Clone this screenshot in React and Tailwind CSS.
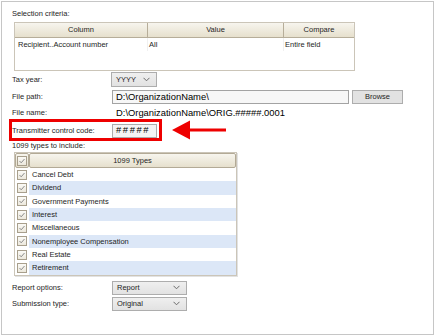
import React from 'react';

const types = [
  'Cancel Debt',
  'Dividend',
  'Government Payments',
  'Interest',
  'Miscellaneous',
  'Nonemployee Compensation',
  'Real Estate',
  'Retirement',
];

function Chevron() {
  return (
    <svg width="7" height="5" viewBox="0 0 7 5" className="shrink-0">
      <polyline points="0.5,0.8 3.5,3.8 6.5,0.8" fill="none" stroke="#6b6b6b" strokeWidth="1" />
    </svg>
  );
}

function CheckBox() {
  return (
    <div className="w-[10px] h-[10px] border border-[#a89f8c] bg-linear-to-b from-[#fbfaf6] to-[#ece8dc] flex items-center justify-center">
      <svg width="8" height="8" viewBox="0 0 8 8">
        <polyline points="1.5,4 3.2,5.8 6.5,2" fill="none" stroke="#8c8c8c" strokeWidth="1" />
      </svg>
    </div>
  );
}

function Select({ value, className }) {
  return (
    <div
      className={`flex items-center justify-between border border-[#adadad] bg-linear-to-b from-[#efefef] to-[#e2e2e2] pl-[4px] pr-[6px] ${className}`}
    >
      <span>{value}</span>
      <Chevron />
    </div>
  );
}

function Row({ label, className, children }) {
  return (
    <div className={`flex items-center ${className}`}>
      <span className="w-[100px] shrink-0">{label}</span>
      {children}
    </div>
  );
}

export default function App() {
  return (
    <div className="w-[435px] h-[335px] bg-white pl-[1px] pt-[1px] font-['Liberation_Sans',Arial,sans-serif] text-[7.5px] text-[#1e1e1e]">
      <div className="w-[433px] h-[334px] border border-[#c6c6c6] pl-[10px] pt-[7px]">
        <p className="leading-[10px]">Selection criteria:</p>

        {/* criteria grid */}
        <div className="mt-[3px] ml-[2px] w-[341px] h-[49px] border border-[#cbc5b8]">
          <div className="flex h-[15px] rounded-t-[2px] border-b border-[#b6ad99] bg-linear-to-b from-[#f7f5ee] to-[#e6e0cd]">
            <div className="w-[133px] flex items-center justify-center border-r border-[#b6ad99]">Column</div>
            <div className="w-[136px] flex items-center justify-center border-r border-[#b6ad99]">Value</div>
            <div className="flex-1 flex items-center justify-center">Compare</div>
          </div>
          <div className="flex h-[13px] items-center">
            <div className="w-[133px] h-full flex items-center pl-[3px] border-r border-[#f0f0f0]">Recipient..Account number</div>
            <div className="w-[136px] h-full flex items-center pl-[1px] border-r border-[#f0f0f0]">All</div>
            <div className="flex-1 h-full flex items-center pl-[1px]">Entire field</div>
          </div>
        </div>

        <Row label="Tax year:" className="mt-[1px] h-[15px]">
          <Select value="YYYY" className="-ml-[1px] w-[46px] h-[15px]" />
        </Row>

        <Row label="File path:" className="mt-[3px] h-[14px]">
          <div className="w-[237px] h-[14px] border border-[#a3a3a3] bg-[#f7f7f7] flex items-center pl-[3px] text-[9.4px] text-black">
            D:\OrganizationName\
          </div>
          <div className="ml-[3px] w-[51px] h-[14px] border border-[#adadad] bg-[#e2e2e2] flex items-center justify-center">
            Browse
          </div>
        </Row>

        <Row label="File name:" className="mt-[2px] h-[14px]">
          <span className="pl-[4px] text-[9.4px] text-black">D:\OrganizationName\ORIG.#####.0001</span>
        </Row>

        <Row label="Transmitter control code:" className="relative mt-[3px] h-[15px]">
          <div className="w-[45px] h-[14px] border border-[#acacac] bg-[#f4f4f4] flex items-center pl-[3px] text-[9.4px] text-black tracking-[1.6px]">
            #####
          </div>
          <div className="absolute -left-[3px] -top-[4px] w-[153px] h-[22px] border-[3px] border-[#ee0000]" />
          <svg className="absolute left-[160px] -top-[3px]" width="54" height="20" viewBox="0 0 54 20">
            <polygon points="0,10 18,0.5 18,19.5" fill="#ee0000" />
            <rect x="17" y="8.5" width="37" height="3" fill="#ee0000" />
          </svg>
        </Row>

        <p className="mt-[3px] leading-[10px]">1099 types to include:</p>

        {/* 1099 types grid */}
        <div className="mt-[1px] ml-[2px] w-[223px] border border-[#cbc5b8] shadow-[1px_1px_0_#e2e2e2]">
          <div className="flex h-[15px]">
            <div className="w-[14px] flex items-center justify-center border border-[#b3aa96] rounded-[2px] bg-linear-to-b from-[#f7f5ee] to-[#e6e0cd]">
              <CheckBox />
            </div>
            <div className="flex-1 flex items-center justify-center border border-[#b3aa96] rounded-[2px] bg-linear-to-b from-[#f7f5ee] to-[#e6e0cd]">
              1099 Types
            </div>
          </div>
          {types.map((t, i) => (
            <div key={t} className="flex h-[13.33px] items-center">
              <div className="w-[14px] h-full flex items-center justify-center">
                <CheckBox />
              </div>
              <div className={`flex-1 h-full flex items-center pl-[3px] ${i % 2 === 1 ? 'bg-[#dce7f7]' : ''}`}>{t}</div>
            </div>
          ))}
        </div>

        <Row label="Report options:" className="mt-[5px] h-[14px]">
          <Select value="Report" className="w-[75px] h-[14px]" />
        </Row>

        <Row label="Submission type:" className="mt-[2px] h-[14px]">
          <Select value="Original" className="w-[75px] h-[14px]" />
        </Row>
      </div>
    </div>
  );
}
